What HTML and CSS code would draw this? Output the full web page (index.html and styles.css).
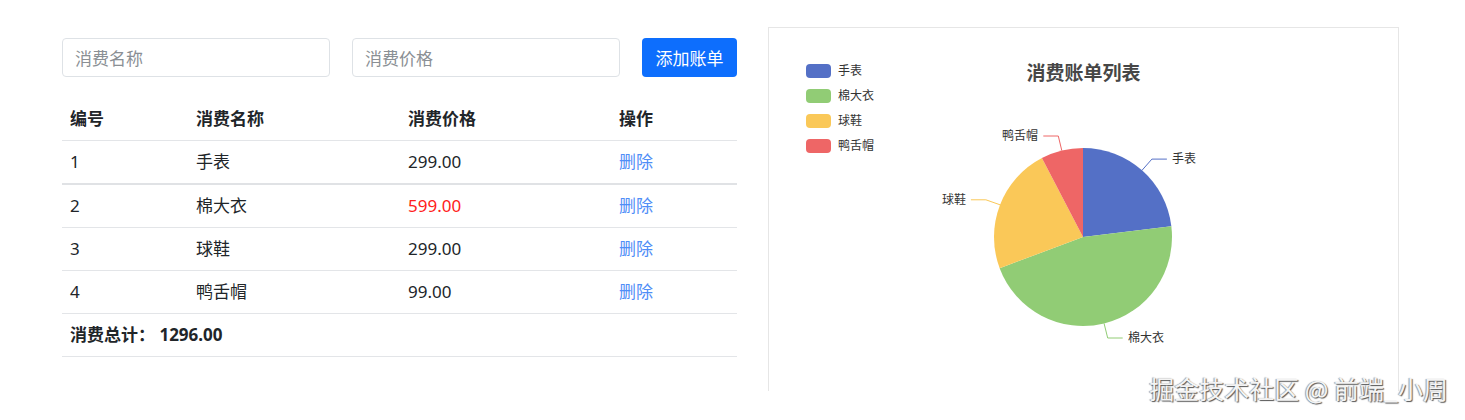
FILE: index.html
```html
<!DOCTYPE html>
<html lang="zh-CN">
<head>
    <meta charset="UTF-8">
    <meta name="viewport" content="width=device-width, initial-scale=1.0">
    <title>消费账单</title>
    <link rel="stylesheet" href="styles.css">
</head>
<body>
    <div class="page">
        <div class="bill">
            <div class="form-row">
                <input class="form-input" type="text" placeholder="消费名称">
                <input class="form-input" type="text" placeholder="消费价格">
                <button class="btn-add">添加账单</button>
            </div>

            <table class="bill-table">
                <thead>
                    <tr>
                        <th class="col-id">编号</th>
                        <th class="col-name">消费名称</th>
                        <th class="col-price">消费价格</th>
                        <th class="col-op">操作</th>
                    </tr>
                </thead>
                <tbody>
                    <tr class="first">
                        <td>1</td>
                        <td>手表</td>
                        <td>299.00</td>
                        <td><a class="del" href="#">删除</a></td>
                    </tr>
                    <tr>
                        <td>2</td>
                        <td>棉大衣</td>
                        <td class="expensive">599.00</td>
                        <td><a class="del" href="#">删除</a></td>
                    </tr>
                    <tr>
                        <td>3</td>
                        <td>球鞋</td>
                        <td>299.00</td>
                        <td><a class="del" href="#">删除</a></td>
                    </tr>
                    <tr>
                        <td>4</td>
                        <td>鸭舌帽</td>
                        <td>99.00</td>
                        <td><a class="del" href="#">删除</a></td>
                    </tr>
                    <tr class="total">
                        <td colspan="4">消费总计： 1296.00</td>
                    </tr>
                </tbody>
            </table>
        </div>

        <div class="chart-box">
            <svg class="chart" width="629" height="363" viewBox="769 28 629 363">
                <!-- legend -->
                <rect x="806" y="64" width="25" height="14" rx="4" fill="#5470c6"/>
                <rect x="806" y="89" width="25" height="14" rx="4" fill="#91cc75"/>
                <rect x="806" y="114" width="25" height="14" rx="4" fill="#fac858"/>
                <rect x="806" y="139" width="25" height="14" rx="4" fill="#ee6666"/>
                <text class="legend-text" x="838" y="75">手表</text>
                <text class="legend-text" x="838" y="100">棉大衣</text>
                <text class="legend-text" x="838" y="125">球鞋</text>
                <text class="legend-text" x="838" y="150">鸭舌帽</text>

                <text class="chart-title" x="1083.5" y="80" text-anchor="middle">消费账单列表</text>

                <!-- pie -->
                <path d="M1083,237 L1083,148 A89,89 0 0 1 1171.35,226.25 Z" fill="#5470c6"/>
                <path d="M1083,237 L1171.35,226.25 A89,89 0 0 1 999.66,268.24 Z" fill="#91cc75"/>
                <path d="M1083,237 L999.66,268.24 A89,89 0 0 1 1041.91,158.06 Z" fill="#fac858"/>
                <path d="M1083,237 L1041.91,158.06 A89,89 0 0 1 1083,148 Z" fill="#ee6666"/>

                <!-- label lines -->
                <polyline points="1142,170.3 1151.9,159.1 1166.9,159.1" stroke="#5470c6" fill="none"/>
                <polyline points="1104.1,323.5 1107.7,338 1122.7,338" stroke="#91cc75" fill="none"/>
                <polyline points="1000.9,205.1 985.9,199.8 970.9,199.8" stroke="#fac858" fill="none"/>
                <polyline points="1061.8,150.6 1058.3,136 1043.3,136" stroke="#ee6666" fill="none"/>

                <text class="pie-label" x="1172" y="163">手表</text>
                <text class="pie-label" x="1128" y="342">棉大衣</text>
                <text class="pie-label" x="966" y="204" text-anchor="end">球鞋</text>
                <text class="pie-label" x="1038" y="140" text-anchor="end">鸭舌帽</text>
            </svg>
        </div>
    </div>

    <div class="watermark">掘金技术社区 @ 前端_小周</div>
</body>
</html>
```

FILE: styles.css
```css
body{
    margin: 0;
    padding: 0;
    background-color: white;
    font-family: "Noto Sans", "Noto Sans CJK SC", sans-serif;
    color: #212529;
    font-size: 17px;
}

.page{
    display: flex;
    align-items: flex-start;
    padding-left: 62px;
    padding-top: 27px;
    gap: 31px;
}

.bill{
    width: 675px;
    padding-top: 11px;
}

.form-row{
    display: flex;
    gap: 22px;
}

.form-input{
    width: 268px;
    height: 39px;
    box-sizing: border-box;
    border: 1px solid #dee2e6;
    border-radius: 4px;
    padding: 0 12px;
    font-family: "Noto Sans CJK SC", sans-serif;
    font-size: 17px;
    color: #212529;
    outline: none;
}

.form-input::placeholder{
    color: #8a8f94;
}

.btn-add{
    width: 95px;
    height: 39px;
    border: none;
    border-radius: 4px;
    background-color: #0d6efd;
    color: white;
    font-family: "Noto Sans CJK SC", sans-serif;
    font-size: 17px;
    padding: 0;
}

.bill-table{
    width: 675px;
    margin-top: 22px;
    border-collapse: collapse;
    table-layout: fixed;
}

.bill-table th,
.bill-table td{
    text-align: left;
    padding: 8px 8px;
    line-height: 26px;
    border-bottom: 1px solid #e3e5e8;
}

.bill-table th{
    font-weight: 700;
    padding-top: 7px;
}

.col-id{ width: 110px; }
.col-name{ width: 196px; }
.col-price{ width: 195px; }
.col-op{ width: 110px; }

.bill-table tr.first td{
    border-bottom: 2px solid #e0e2e5;
}

.expensive{
    color: #ff2020;
}

.del{
    color: #4f8ef7;
    text-decoration: none;
}

.bill-table tr.total td{
    font-weight: 700;
}

.chart-box{
    width: 629px;
    height: 363px;
    border: 1px solid #e6e6e6;
    border-bottom: none;
}

.chart{
    display: block;
}

.legend-text,
.pie-label{
    font-family: "Noto Sans CJK SC", sans-serif;
    font-size: 12px;
    fill: #333;
}

.chart-title{
    font-family: "Noto Sans CJK SC", sans-serif;
    font-size: 19px;
    font-weight: 700;
    fill: #464646;
}

.watermark{
    position: absolute;
    right: 17px;
    top: 370px;
    font-family: "Noto Sans CJK SC", sans-serif;
    font-size: 25px;
    color: #f4f4f4;
    text-shadow: 1px 1px 1px #555, -1px 0 1px #999;
}
```
